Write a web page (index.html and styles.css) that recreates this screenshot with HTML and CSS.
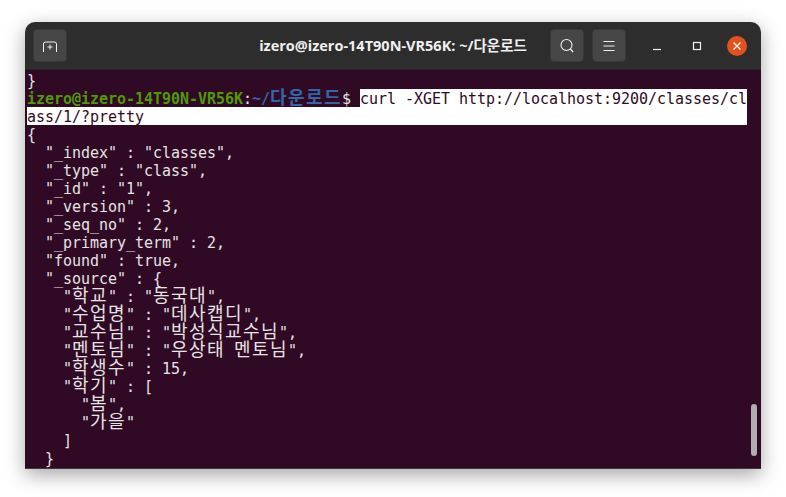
FILE: index.html
```html
<!DOCTYPE html>
<html lang="ko">
<head>
<meta charset="utf-8">
<title>Terminal</title>
<link rel="stylesheet" href="styles.css">
</head>
<body>
<div class="window">
  <header class="titlebar">
    <button class="tb-btn">
      <svg width="16" height="16" viewBox="0 0 16 16"><path d="M1.5 14V6Q1.5 4 3.5 4H12.5Q14.5 4 14.5 6V14M8 6.5V11.5M5.5 9H10.5" fill="none" stroke="#f0f0f0" stroke-width="1"/></svg>
    </button>
    <div class="title">izero@izero-14T90N-VR56K: ~/<span class="title-ko">다운로드</span></div>
    <div class="tb-right">
      <button class="tb-btn">
        <svg width="16" height="16" viewBox="0 0 16 16"><circle cx="7.5" cy="7" r="5.5" fill="none" stroke="#f0f0f0" stroke-width="1.1"/><path d="M11.5 11L14 14" stroke="#f0f0f0" stroke-width="1.4"/></svg>
      </button>
      <button class="tb-btn">
        <svg width="16" height="16" viewBox="0 0 16 16"><path d="M2.5 3.5H13.5M2.5 8H13.5M2.5 12.5H13.5" stroke="#f0f0f0" stroke-width="1"/></svg>
      </button>
      <div class="win-controls">
        <span class="wc"><svg width="10" height="10" viewBox="0 0 10 10"><path d="M1 8.5H9" stroke="#f0f0f0" stroke-width="1.2"/></svg></span>
        <span class="wc"><svg width="10" height="10" viewBox="0 0 10 10"><rect x="1.5" y="1.5" width="7" height="7" fill="none" stroke="#f0f0f0" stroke-width="1.2"/></svg></span>
        <span class="wc close"><svg width="10" height="10" viewBox="0 0 10 10"><path d="M1.5 1.5L8.5 8.5M8.5 1.5L1.5 8.5" stroke="#f6f6f6" stroke-width="1.3"/></svg></span>
      </div>
    </div>
  </header>
  <main class="terminal">
<pre class="screen"><span class="ln">}</span>
<span class="ln"><b class="green">izero@izero-14T90N-VR56K</b>:<b class="blue">~/<span class="ko">다운로드</span></b>$ <span class="sel">curl -XGET http://localhost:9200/classes/cl</span></span>
<span class="ln sel-full">ass/1/?pretty</span>
<span class="ln">{</span>
<span class="ln">  "_index" : "classes",</span>
<span class="ln">  "_type" : "class",</span>
<span class="ln">  "_id" : "1",</span>
<span class="ln">  "_version" : 3,</span>
<span class="ln">  "_seq_no" : 2,</span>
<span class="ln">  "_primary_term" : 2,</span>
<span class="ln">  "found" : true,</span>
<span class="ln">  "_source" : {</span>
<span class="ln">    "<span class="ko">학교</span>" : "<span class="ko">동국대</span>",</span>
<span class="ln">    "<span class="ko">수업명</span>" : "<span class="ko">데사캡디</span>",</span>
<span class="ln">    "<span class="ko">교수님</span>" : "<span class="ko">박성식교수님</span>",</span>
<span class="ln">    "<span class="ko">멘토님</span>" : "<span class="ko">우상태</span> <span class="ko">멘토님</span>",</span>
<span class="ln">    "<span class="ko">학생수</span>" : 15,</span>
<span class="ln">    "<span class="ko">학기</span>" : [</span>
<span class="ln">      "<span class="ko">봄</span>",</span>
<span class="ln">      "<span class="ko">가을</span>"</span>
<span class="ln">    ]</span>
<span class="ln">  }</span></pre>
    <div class="scrollbar"></div>
  </main>
</div>
</body>
</html>
```
FILE: styles.css
```css
* { box-sizing: border-box; }
html, body { margin: 0; height: 100%; background: #fff; overflow: hidden; }
body { padding: 22px 25px 28px; }
.window {
  width: 736px;
  height: 447px;
  display: flex;
  flex-direction: column;
  border-radius: 10px 10px 0 0;
  box-shadow: 0 6px 20px rgba(0,0,0,.35);
}
.titlebar {
  height: 48px;
  flex: none;
  display: flex;
  align-items: center;
  justify-content: space-between;
  padding: 0 14px 0 8px;
  position: relative;
  background: #2d2d2d;
  border-radius: 10px 10px 0 0;
  border-bottom: 1px solid #232323;
}
.tb-btn {
  width: 34px;
  height: 33px;
  padding: 0;
  border: 1px solid #383838;
  border-radius: 4px;
  background: #464646;
  display: flex;
  align-items: center;
  justify-content: center;
}
.title {
  position: absolute;
  left: 0;
  right: 0;
  top: 13px;
  text-align: center;
  font: 700 14.5px/20px "Open Sans", "Noto Sans", sans-serif;
  color: #f0f0f0;
  pointer-events: none;
}
.title-ko { font-family: "Noto Sans CJK KR", sans-serif; font-weight: 700; }
.tb-right { display: flex; align-items: center; gap: 8px; position: relative; }
.win-controls { display: flex; align-items: center; gap: 20px; margin-left: 13px; }
.wc { width: 20px; height: 20px; display: flex; align-items: center; justify-content: center; }
.close { background: #e2511e; border-radius: 50%; }
.terminal {
  flex: 1;
  min-height: 0;
  position: relative;
  background: #300a24;
  padding: 1px 0 0 2px;
  overflow: hidden;
  border-bottom: 1px solid #3a3a3a;
}
.screen {
  margin: 0;
  font: 15px/18px "DejaVu Sans Mono", monospace;
  letter-spacing: -0.03px;
  color: #e6e3e4;
}
.ln { display: inline-block; height: 18px; line-height: 20px; vertical-align: top; }
.screen b { font-weight: 700; }
.green { color: #4e9a06; }
.blue { color: #3465a4; }
.ko {
  font-family: "Noto Sans CJK KR", sans-serif;
  font-size: 18px;
  letter-spacing: 1.44px;
  line-height: 0;
}
.sel { background: #fff; color: #300a24; display: inline-block; height: 18px; width: 387px; vertical-align: top; }
.sel-full { background: #fff; color: #300a24; width: 720px; }
.scrollbar {
  position: absolute;
  right: 4px;
  top: 334px;
  width: 6px;
  height: 52px;
  border-radius: 3px;
  background: #b0aeb0;
}
```
